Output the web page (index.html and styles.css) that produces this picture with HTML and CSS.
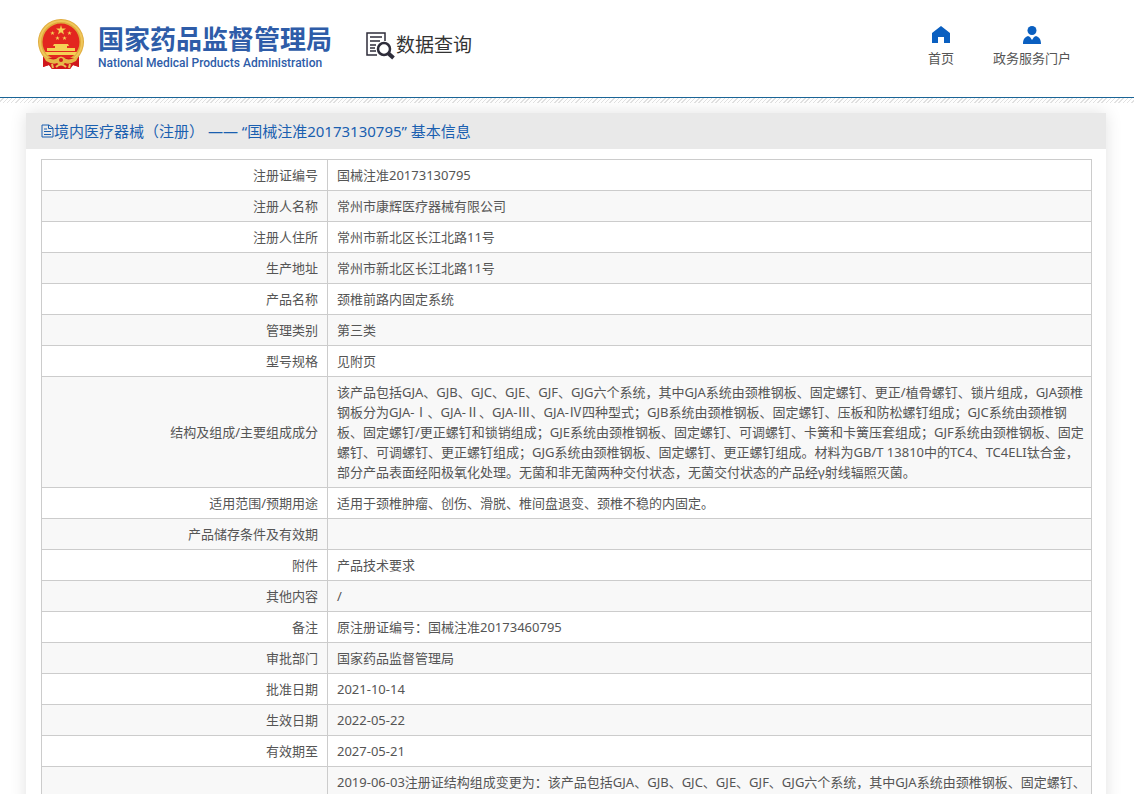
FILE: index.html
```html
<!DOCTYPE html>
<html lang="zh-CN">
<head>
    <meta charset="utf-8">
    <title>数据查询</title>
    <link rel="stylesheet" href="styles.css">
</head>
<body>
    <header class="header">
        <a class="logo" href="#">
            <svg class="emblem" width="46" height="52" viewBox="0 0 46 52" aria-hidden="true">
                <path d="M5 34h36v15l-6-2-3 4H14l-3-4-6 2z" fill="#d0171c"/>
                <circle cx="23" cy="24" r="23" fill="#e0ab3c"/>
                <circle cx="23" cy="24" r="21" fill="none" stroke="#efc65a" stroke-width="2"/>
                <circle cx="23" cy="24" r="18.500" fill="#e3261f"/>
                <g fill="#f5d055">
                    <path d="M23 7l1 3.500h4l-3 2.300 1 3.700-3-2.300-3 2.300 1-3.700-3-2.300h4z"/>
                    <path id="star" d="M14.500 13l.6 1.500h1.600l-1.300 1 .5 1.600-1.400-1-1.400 1 .5-1.600-1.300-1h1.600z"/>
                    <use href="#star" x="17"/>
                    <use href="#star" x="5" y="5"/>
                    <use href="#star" x="12" y="5"/>
                    <path d="M16 26h14l1 2h-2v2h8v3h-28v-3h8v-2h-2z"/>
                    <path d="M7 34h32l-2 3H9z"/>
                </g>
                <path d="M5 40h36v9l-6-2-3 4H14l-3-4-6 2z" fill="#d0171c"/>
                <path d="M4 36q8 7 14 5q5-5 10 0q6 2 14-5l-4 7q-7 4-11 2q-4 4-8 0q-4 2-11-2z" fill="#e6b746"/>
                <circle cx="23" cy="42" r="2" fill="#d0171c"/>
                <path d="M14 46l1 4M32 46l-1 4M18 49q5-5 10 0" fill="none" stroke="#eac050" stroke-width="2"/>
            </svg>
            <span class="logo-text">
                <span class="logo-cn">国家药品监督管理局</span>
                <span class="logo-en">National Medical Products Administration</span>
            </span>
        </a>

        <a class="query" href="#">
            <svg width="30" height="30" viewBox="0 0 30 30" fill="none" stroke="#2e2d3a" aria-hidden="true">
                <path d="M19 11V3H1v22h10" stroke-width="1.500"/>
                <path d="M4 7h12M4 11h10M4 15h6M4 18h5M4 21h6" stroke-width="1.500"/>
                <circle cx="18" cy="19" r="6" stroke-width="2.500"/>
                <path d="M22.500 23.500l5 4.500" stroke-width="4"/>
            </svg>
            <span>数据查询</span>
        </a>

        <nav class="nav">
            <a href="#">
                <svg width="18" height="18" viewBox="0 0 18 18" fill="#0a5fc0" aria-hidden="true">
                    <path d="M9 0l9 7v10h-6v-6H6v6H0V7z"/>
                </svg>
                <span>首页</span>
            </a>
            <a href="#">
                <svg width="18" height="18" viewBox="0 0 18 18" fill="#0a5fc0" aria-hidden="true">
                    <circle cx="9" cy="4.500" r="4.500"/>
                    <path d="M0 18c0-5 2-7 5-8l2 1 2 3 2-3 2-1c3 1 5 3 5 8z"/>
                </svg>
                <span>政务服务门户</span>
            </a>
        </nav>
    </header>
    <div class="hatch"></div>

    <main class="panel">
        <h1 class="panel-title">
            <svg width="13" height="14" viewBox="0 0 13 14" fill="none" stroke="#1a5fb0" aria-hidden="true">
                <path d="M1 1h7l4 3v9H1zM7.500 1v3.500H12M3 5h3M3 7.500h7M3 10.500h7"/>
            </svg>
            <span>境内医疗器械（注册） —— “国械注准20173130795” 基本信息</span>
        </h1>
        <div class="panel-body">
            <table class="info">
                <tr><th scope="row">注册证编号</th><td>国械注准20173130795</td></tr>
                <tr><th scope="row">注册人名称</th><td>常州市康辉医疗器械有限公司</td></tr>
                <tr><th scope="row">注册人住所</th><td>常州市新北区长江北路11号</td></tr>
                <tr><th scope="row">生产地址</th><td>常州市新北区长江北路11号</td></tr>
                <tr><th scope="row">产品名称</th><td>颈椎前路内固定系统</td></tr>
                <tr><th scope="row">管理类别</th><td>第三类</td></tr>
                <tr><th scope="row">型号规格</th><td>见附页</td></tr>
                <tr><th scope="row">结构及组成/主要组成成分</th><td>该产品包括GJA、GJB、GJC、GJE、GJF、GJG六个系统，其中GJA系统由颈椎钢板、固定螺钉、更正/植骨螺钉、锁片组成，GJA颈椎钢板分为GJA-Ⅰ、GJA-Ⅱ、GJA-Ⅲ、GJA-Ⅳ四种型式；GJB系统由颈椎钢板、固定螺钉、压板和防松螺钉组成；GJC系统由颈椎钢板、固定螺钉/更正螺钉和锁销组成；GJE系统由颈椎钢板、固定螺钉、可调螺钉、卡簧和卡簧压套组成；GJF系统由颈椎钢板、固定螺钉、可调螺钉、更正螺钉组成；GJG系统由颈椎钢板、固定螺钉、更正螺钉组成。材料为GB/T 13810中的TC4、TC4ELI钛合金，部分产品表面经阳极氧化处理。无菌和非无菌两种交付状态，无菌交付状态的产品经γ射线辐照灭菌。</td></tr>
                <tr><th scope="row">适用范围/预期用途</th><td>适用于颈椎肿瘤、创伤、滑脱、椎间盘退变、颈椎不稳的内固定。</td></tr>
                <tr><th scope="row">产品储存条件及有效期</th><td></td></tr>
                <tr><th scope="row">附件</th><td>产品技术要求</td></tr>
                <tr><th scope="row">其他内容</th><td>/</td></tr>
                <tr><th scope="row">备注</th><td>原注册证编号：国械注准20173460795</td></tr>
                <tr><th scope="row">审批部门</th><td>国家药品监督管理局</td></tr>
                <tr><th scope="row">批准日期</th><td>2021-10-14</td></tr>
                <tr><th scope="row">生效日期</th><td>2022-05-22</td></tr>
                <tr><th scope="row">有效期至</th><td>2027-05-21</td></tr>
                <tr class="changes"><th scope="row"></th><td>2019-06-03注册证结构组成变更为：该产品包括GJA、GJB、GJC、GJE、GJF、GJG六个系统，其中GJA系统由颈椎钢板、固定螺钉、</td></tr>
            </table>
        </div>
    </main>
</body>
</html>
```
FILE: styles.css
```css
* {
    box-sizing: border-box;
}

body {
    margin: 0;
    height: 100vh;
    overflow: hidden;
    background-color: #fff;
    color: #555;
    font-family: "Noto Sans", "Noto Sans CJK SC", sans-serif;
    font-size: 13px;
    line-height: 20px;
}

a {
    color: inherit;
    text-decoration: none;
}

.header {
    display: flex;
    align-items: flex-start;
    height: 98px;
    padding: 18px 63px 0 38px;
    border-bottom: 1px solid #1a6496;
}

.logo {
    display: flex;
    gap: 14px;
    color: #2e5ca8;
}

.logo-text {
    display: flex;
    flex-direction: column;
    padding-top: 4px;
    white-space: nowrap;
}

.logo-cn {
    font-family: "Noto Sans CJK SC", sans-serif;
    font-size: 26px;
    font-weight: 700;
    line-height: 32px;
}

.logo-en {
    font-family: Roboto, sans-serif;
    font-size: 12px;
    font-weight: 500;
    line-height: 18px;
}

.query {
    display: flex;
    align-items: center;
    margin: 12px 0 0 34px;
    color: #333;
    font-size: 19px;
    line-height: 30px;
}

.nav {
    display: flex;
    gap: 39px;
    margin-left: auto;
    padding-top: 8px;
}

.nav a {
    display: flex;
    flex-direction: column;
    align-items: center;
    gap: 4px;
}

.hatch {
    height: 5px;
    background: repeating-linear-gradient(135deg, #fff 0 2px, #e2e2e2 2px 3px);
}

.panel {
    margin: 10px 28px 0 26px;
    box-shadow: 0 0 16px rgba(0, 0, 0, 0.12);
}

.panel-title {
    display: flex;
    align-items: center;
    height: 36px;
    margin: 0;
    padding: 0 15px;
    background-color: #e9e9e9;
    color: #1a5fb0;
    font-size: 15px;
    font-weight: 400;
}

.panel-body {
    padding: 10px 14px 10px 15px;
    background-color: #fff;
}

.info {
    width: 100%;
    border: 1px solid #ccc;
    border-collapse: collapse;
}

.info th,
.info td {
    height: 31px;
    padding: 5px 9px;
    border: 1px solid #ccc;
    text-align: left;
}

.info th {
    width: 286px;
    font-weight: 400;
    text-align: right;
}

.info td {
    padding-right: 3px;
}

.info tr:nth-child(even) {
    background-color: #f8f8f8;
}

.info .changes td {
    vertical-align: top;
}
```
